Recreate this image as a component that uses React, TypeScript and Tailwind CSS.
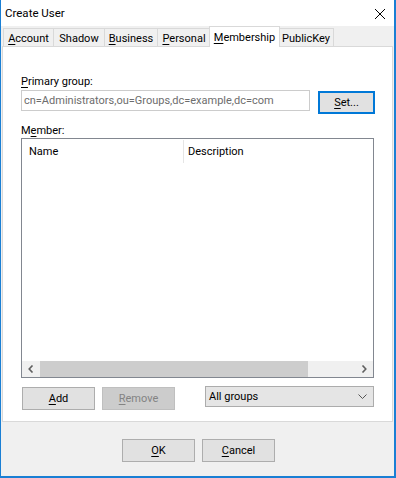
import React from 'react';

const font = "font-['Roboto',_'Liberation_Sans',_sans-serif]";

const tabs = [
  { label: 'Account', key: 'A', w: 'w-[51px]' },
  { label: 'Shadow', key: '', w: 'w-[51px]' },
  { label: 'Business', key: 'B', w: 'w-[53px]' },
  { label: 'Personal', key: 'P', w: 'w-[53px]' },
  { label: 'Membership', key: 'M', w: 'w-[71px]', active: true },
  { label: 'PublicKey', key: '', w: 'w-[55px]' },
];

// underline first letter when it is the access key
const Label = ({ text, k }: { text: string; k: string }) =>
  k ? (
    <span>
      <u className="underline-offset-[2px]">{text[0]}</u>
      {text.slice(1)}
    </span>
  ) : (
    <span>{text}</span>
  );

const Button = ({ text, k, disabled, cls }: { text: string; k: string; disabled?: boolean; cls: string }) => {
  const i = text.indexOf(k);
  return (
    <div
      className={`${cls} flex items-center justify-center border ${
        disabled ? 'bg-[#cccccc] border-[#bfbfbf] text-[#838383]' : 'bg-[#e1e1e1] border-[#adadad] text-black'
      }`}
    >
      <span>
        {text.slice(0, i)}
        <u className="underline-offset-[2px]">{text[i]}</u>
        {text.slice(i + 1)}
      </span>
    </div>
  );
};

const App: React.FC = () => {
  return (
    <div
      className={`${font} w-[396px] h-[478px] flex flex-col bg-[#f0f0f0] border-l border-r-2 border-b-2 border-[#1a7fd4] text-[11px] text-black leading-[15px]`}
    >
      {/* Title bar */}
      <div className="h-[26px] bg-white flex items-start justify-between pl-[4px] pr-[8px]">
        <span className="mt-[6px] text-[11.5px]">Create User</span>
        <svg width="12" height="12" viewBox="0 0 12 12" className="mt-[8px]">
          <path d="M1 1L11 11M11 1L1 11" stroke="#000" strokeWidth="1" />
        </svg>
      </div>

      {/* Tabs */}
      <div className="h-[20px] flex items-end pl-[2px]">
        {tabs.map((t, i) =>
          t.active ? (
            <div
              key={t.label}
              className={`${t.w} -ml-[2px] -mr-[1px] h-[21px] -mb-px relative z-10 bg-white border border-b-0 border-[#d9d9d9] flex items-start justify-center pt-[3px]`}
            >
              <Label text={t.label} k={t.key} />
            </div>
          ) : (
            <div
              key={t.label}
              className={`${t.w} h-[18px] bg-[#f0f0f0] border-t border-r border-[#d9d9d9] ${
                i === 0 ? 'border-l' : ''
              } flex items-start justify-center pt-[2px]`}
            >
              <Label text={t.label} k={t.key} />
            </div>
          )
        )}
      </div>

      {/* Panel */}
      <div className="ml-[1px] mr-[1px] h-[376px] bg-white border border-[#d9d9d9] flex flex-col pl-[18px] pt-[27px]">
        <div>
          <Label text="Primary group:" k="P" />
        </div>
        <div className="flex items-start mt-[1px]">
          <div className="w-[289px] h-[21px] border border-[#cccccc] flex items-center pl-[2px] text-[#6d6d6d] whitespace-nowrap overflow-hidden">
            cn=Administrators,ou=Groups,dc=example,dc=com
          </div>
          <div className="ml-[8px] mt-[1px] w-[57px] h-[23px] border-2 border-[#0078d7] bg-[#e1e1e1] flex items-center justify-center">
            <span>
              <u className="underline-offset-[2px]">S</u>et...
            </span>
          </div>
        </div>
        <div className="mt-[9px]">
          M<u className="underline-offset-[2px]">e</u>mber:
        </div>
        <div className="w-[353px] h-[240px] border border-[#828790] flex flex-col">
          <div className="h-[24px] flex">
            <div className="w-[161px] pl-[7px] pt-[5px]">Name</div>
            <div className="w-px h-[23px] mt-[1px] bg-[#e5e5e5]" />
            <div className="pl-[4px] pt-[5px]">Description</div>
          </div>
          <div className="flex-1" />
          <div className="h-[16px] flex bg-[#f0f0f0]">
            <div className="w-[18px] flex items-center justify-center">
              <svg width="6" height="8" viewBox="0 0 6 8">
                <path d="M4.5 0.5L1.2 4L4.5 7.5" stroke="#606060" strokeWidth="1.6" fill="none" />
              </svg>
            </div>
            <div className="w-[268px] bg-[#cdcdcd]" />
            <div className="flex-1" />
            <div className="w-[18px] flex items-center justify-center">
              <svg width="6" height="8" viewBox="0 0 6 8">
                <path d="M1.5 0.5L4.8 4L1.5 7.5" stroke="#606060" strokeWidth="1.6" fill="none" />
              </svg>
            </div>
          </div>
        </div>
        <div className="flex items-start mt-[9px]">
          <Button cls="ml-px w-[73px] h-[23px]" text="Add" k="A" />
          <Button cls="ml-[7px] w-[73px] h-[23px]" text="Remove" k="R" disabled />
          <div className="ml-[30px] -mt-px w-[169px] h-[21px] bg-[#e5e5e5] border border-[#acacac] flex items-center justify-between pl-[3px] pr-[6px]">
            <span>All groups</span>
            <svg width="9" height="5" viewBox="0 0 9 5">
              <path d="M0.5 0.5L4.5 4.5L8.5 0.5" stroke="#555" strokeWidth="1" fill="none" />
            </svg>
          </div>
        </div>
      </div>

      {/* Bottom buttons */}
      <div className="flex pl-[121px] pt-[17px]">
        <Button cls="w-[73px] h-[23px]" text="OK" k="O" />
        <Button cls="ml-[7px] w-[73px] h-[23px]" text="Cancel" k="C" />
      </div>
    </div>
  );
};

export default App;
